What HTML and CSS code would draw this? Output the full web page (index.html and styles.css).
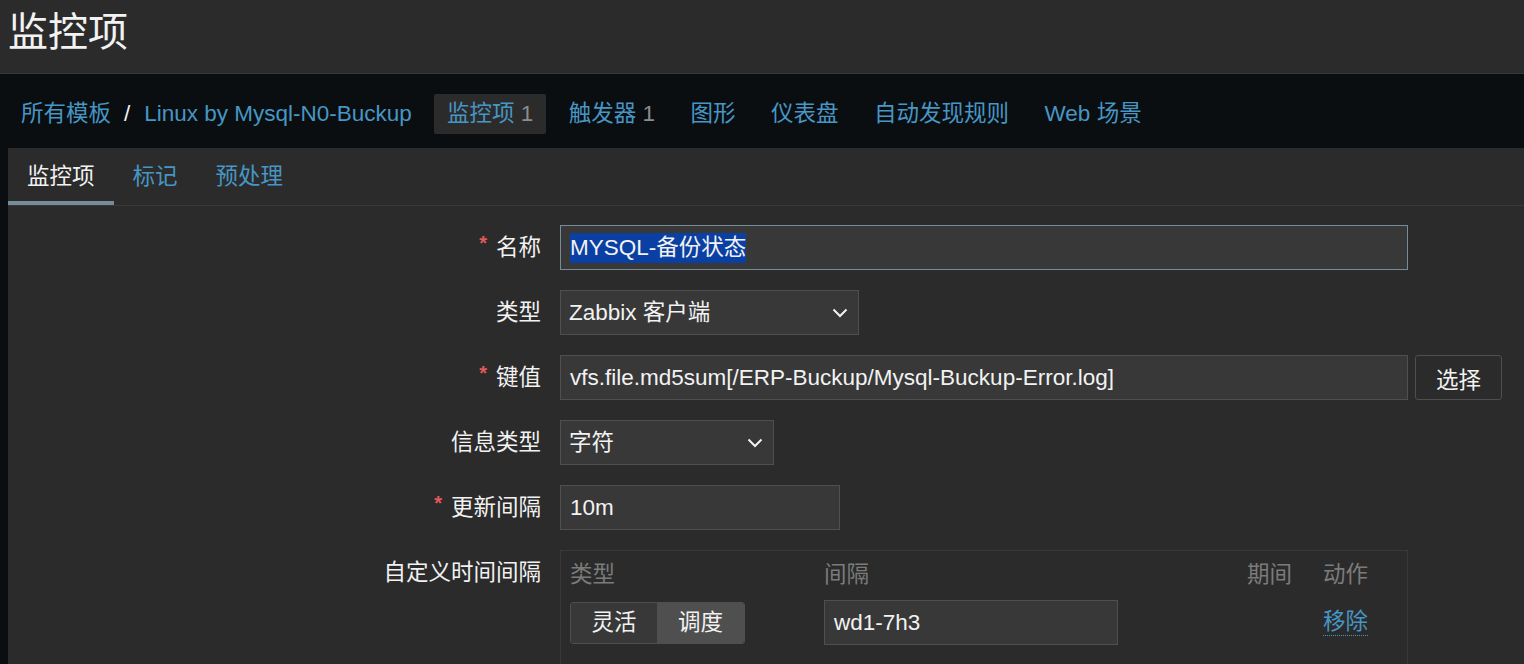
FILE: index.html
```html
<!DOCTYPE html>
<html lang="zh">
<head>
<meta charset="utf-8">
<title>监控项</title>
<link rel="stylesheet" href="styles.css">
</head>
<body>
<header class="page-header">
  <h1 class="page-title">监控项</h1>
</header>
<nav class="nav-bar">
  <ul class="breadcrumbs">
    <li><a class="link" href="#">所有模板</a></li>
    <li class="sep">/</li>
    <li><a class="link" href="#">Linux by Mysql-N0-Buckup</a></li>
  </ul>
  <ul class="nav-tabs">
    <li class="nav-tab active"><a class="link" href="#">监控项</a> <span class="count">1</span></li>
    <li class="nav-tab"><a class="link" href="#">触发器</a> <span class="count">1</span></li>
    <li class="nav-tab"><a class="link" href="#">图形</a></li>
    <li class="nav-tab"><a class="link" href="#">仪表盘</a></li>
    <li class="nav-tab"><a class="link" href="#">自动发现规则</a></li>
    <li class="nav-tab"><a class="link" href="#">Web 场景</a></li>
  </ul>
</nav>
<main class="content">
  <ul class="tabs">
    <li class="tab selected">监控项</li>
    <li class="tab">标记</li>
    <li class="tab">预处理</li>
  </ul>
  <form class="form">
    <label class="form-label"><span class="req">*</span>名称</label>
    <div class="field">
      <div class="input input-wide focused"><span class="selected-text">MYSQL-备份状态</span></div>
    </div>

    <label class="form-label">类型</label>
    <div class="field">
      <div class="select select-type"><span>Zabbix 客户端</span>
        <svg class="chevron" width="16" height="10" viewBox="0 0 16 10"><path d="M1.5 1.5 L8 8 L14.5 1.5" fill="none" stroke="#f2f2f2" stroke-width="2"/></svg>
      </div>
    </div>

    <label class="form-label"><span class="req">*</span>键值</label>
    <div class="field">
      <div class="input input-wide">vfs.file.md5sum[/ERP-Buckup/Mysql-Buckup-Error.log]</div>
      <button class="btn" type="button">选择</button>
    </div>

    <label class="form-label">信息类型</label>
    <div class="field">
      <div class="select select-info"><span>字符</span>
        <svg class="chevron" width="16" height="10" viewBox="0 0 16 10"><path d="M1.5 1.5 L8 8 L14.5 1.5" fill="none" stroke="#f2f2f2" stroke-width="2"/></svg>
      </div>
    </div>

    <label class="form-label"><span class="req">*</span>更新间隔</label>
    <div class="field">
      <div class="input input-short">10m</div>
    </div>

    <label class="form-label">自定义时间间隔</label>
    <div class="field">
      <div class="intervals">
        <div class="th">类型</div>
        <div class="th">间隔</div>
        <div class="th">期间</div>
        <div class="th">动作</div>
        <div class="td">
          <div class="segmented">
            <span class="seg">灵活</span><span class="seg seg-on">调度</span>
          </div>
        </div>
        <div class="td"><div class="input input-interval">wd1-7h3</div></div>
        <div class="td"></div>
        <div class="td"><a class="link remove" href="#">移除</a></div>
        <div class="td spacer"></div>
      </div>
    </div>
  </form>
</main>
</body>
</html>
```

FILE: styles.css
```css
html, body {
  margin: 0;
  padding: 0;
}
body {
  background: #0a0e11;
  font-family: "Liberation Sans", "Noto Sans CJK SC", sans-serif;
  font-size: 22.5px;
  color: #f2f2f2;
  min-height: 664px;
  overflow: hidden;
}
ul {
  list-style: none;
  margin: 0;
  padding: 0;
}
a {
  text-decoration: none;
}
.link {
  color: #4796c4;
}

/* header */
.page-header {
  box-sizing: border-box;
  height: 74px;
  background: #2b2b2b;
  border-bottom: 1px solid #383838;
  display: flex;
  align-items: center;
  padding: 0 8px 9px;
}
.page-title {
  margin: 0;
  font-size: 40px;
  font-weight: normal;
  line-height: 1;
}

/* nav */
.nav-bar {
  box-sizing: border-box;
  height: 74px;
  padding: 5px 0 0 21px;
  display: flex;
  align-items: center;
}
.breadcrumbs {
  display: flex;
  align-items: center;
  line-height: 40px;
}
.sep {
  margin: 0 14px 0 13px;
  color: #f2f2f2;
}
.nav-tabs {
  display: flex;
  align-items: center;
  gap: 9.5px;
  margin-left: 22px;
}
.nav-tab {
  height: 40px;
  line-height: 40px;
  padding: 0 13px;
  border-radius: 2px;
  white-space: nowrap;
}
.nav-tab.active {
  background: #2b2b2b;
}
.count {
  color: #8a8d90;
}

/* content */
.content {
  margin-left: 8px;
  background: #2b2b2b;
  min-height: 516px;
}
.tabs {
  display: flex;
  border-bottom: 1px solid #383838;
}
.tab {
  padding: 17px 19px 12px;
  line-height: 24px;
  border-bottom: 4px solid transparent;
  color: #4796c4;
}
.tab.selected {
  color: #f2f2f2;
  border-bottom-color: #768d99;
}

/* form */
.form {
  display: grid;
  grid-template-columns: 533px 1fr;
  column-gap: 19px;
  row-gap: 20px;
  padding-top: 19px;
}
.form-label {
  text-align: right;
  line-height: 45px;
  height: 45px;
  white-space: nowrap;
}
.req {
  color: #e45959;
  font-size: 20px;
  font-weight: bold;
  line-height: 0;
  position: relative;
  top: -5px;
  margin-right: 9px;
}
.field {
  display: flex;
  align-items: flex-start;
}
.input {
  box-sizing: border-box;
  height: 45px;
  line-height: 43px;
  padding: 0 9px;
  background: #383838;
  border: 1px solid #4f4f4f;
  color: #f2f2f2;
  white-space: nowrap;
  overflow: hidden;
}
.input-wide {
  width: 848px;
}
.input-short {
  width: 280px;
}
.input-interval {
  width: 294px;
}
.focused {
  border-color: #768d99;
}
.selected-text {
  display: inline-block;
  background: #0a3fa3;
  line-height: 30px;
  vertical-align: middle;
  position: relative;
  top: -1px;
}
.select {
  box-sizing: border-box;
  height: 45px;
  line-height: 43px;
  padding: 0 10px 0 8px;
  background: #383838;
  border: 1px solid #4f4f4f;
  display: flex;
  justify-content: space-between;
  align-items: center;
}
.select-type {
  width: 299px;
}
.select-info {
  width: 214px;
}
.chevron {
  display: block;
}
.btn {
  box-sizing: border-box;
  height: 45px;
  width: 87px;
  margin-left: 7px;
  background: #2b2b2b;
  border: 1px solid #4f4f4f;
  border-radius: 3px;
  color: #f2f2f2;
  font: inherit;
  padding: 0;
}

/* custom intervals */
.intervals {
  box-sizing: border-box;
  width: 848px;
  border: 1px solid #383838;
  padding: 0 9px 20px;
  display: grid;
  grid-template-columns: 254px 423px 76px 1fr;
}
.th {
  color: #7b7b7b;
  line-height: 30px;
  padding: 9px 0 10px;
}
.td {
  height: 45px;
  display: flex;
  align-items: center;
}
.spacer {
  grid-column: 1 / -1;
  height: 20px;
}
.segmented {
  display: flex;
  height: 42px;
  box-sizing: border-box;
  border: 1px solid #4f4f4f;
  border-radius: 3px;
  overflow: hidden;
}
.seg {
  width: 86px;
  line-height: 40px;
  text-align: center;
  background: #383838;
}
.seg-on {
  width: 87px;
  background: #4f4f4f;
}
.remove {
  line-height: 26px;
  border-bottom: 1px dotted #4796c4;
}
```
